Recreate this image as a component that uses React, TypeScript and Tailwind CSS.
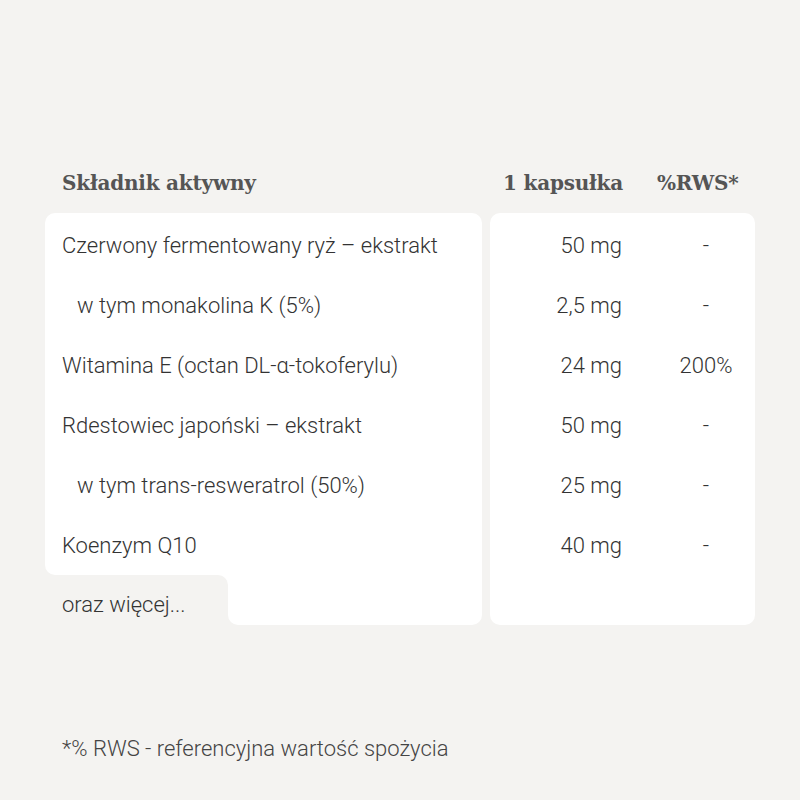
import React from "react";

const rows = [
  { name: "Czerwony fermentowany ryż – ekstrakt", amount: "50 mg", rws: "-" },
  { name: "w tym monakolina K (5%)", amount: "2,5 mg", rws: "-", sub: true },
  { name: "Witamina E (octan DL-α-tokoferylu)", amount: "24 mg", rws: "200%" },
  { name: "Rdestowiec japoński – ekstrakt", amount: "50 mg", rws: "-" },
  { name: "w tym trans-resweratrol (50%)", amount: "25 mg", rws: "-", sub: true },
  { name: "Koenzym Q10", amount: "40 mg", rws: "-" },
];

export default function App() {
  return (
    <div
      className="w-[800px] h-[800px] bg-[#f4f3f1] px-[45px] pt-[170px] text-[#333] font-light"
      style={{ fontFamily: "Roboto, 'Open Sans', sans-serif" }}
    >
      {/* header */}
      <div
        className="flex gap-[8px] h-[26px] items-center text-[20px] font-bold text-[#555] tracking-[-0.2px]"
        style={{ fontFamily: "'DejaVu Serif', 'Liberation Serif', serif" }}
      >
        <div className="w-[437px] pl-[17px]">Składnik aktywny</div>
        <div className="w-[265px] flex">
          <div className="w-[133px] text-right whitespace-nowrap">1 kapsułka</div>
          <div className="pl-[34px] whitespace-nowrap">%RWS*</div>
        </div>
      </div>

      <div className="flex gap-[8px] mt-[17px] text-[22px]">
        {/* ingredients */}
        <div className="w-[437px] flex flex-col">
          <div className="bg-white rounded-t-[10px] rounded-bl-[10px] pt-[2px]">
            {rows.map((r) => (
              <div
                key={r.name}
                className={`h-[60px] flex items-center ${r.sub ? "pl-[32px]" : "pl-[17px]"}`}
              >
                {r.name}
              </div>
            ))}
          </div>
          <div className="flex h-[50px]">
            <div className="w-[183px] bg-white">
              <div className="h-full bg-[#f4f3f1] rounded-tr-[10px] pl-[17px] pt-[17px] leading-[26px]">
                oraz więcej...
              </div>
            </div>
            <div className="flex-1 bg-white rounded-b-[10px]" />
          </div>
        </div>

        {/* amounts */}
        <div className="w-[265px] bg-white rounded-[10px] pt-[2px] h-[412px]">
          {rows.map((r) => (
            <div key={r.name} className="h-[60px] flex items-center">
              <div className="w-[132px] text-right">{r.amount}</div>
              <div className="flex-1 pl-[35px] text-center">{r.rws}</div>
            </div>
          ))}
        </div>
      </div>

      <div className="mt-[110px] pl-[17px] text-[22px] text-[#444] leading-[28px]">
        *% RWS - referencyjna wartość spożycia
      </div>
    </div>
  );
}
